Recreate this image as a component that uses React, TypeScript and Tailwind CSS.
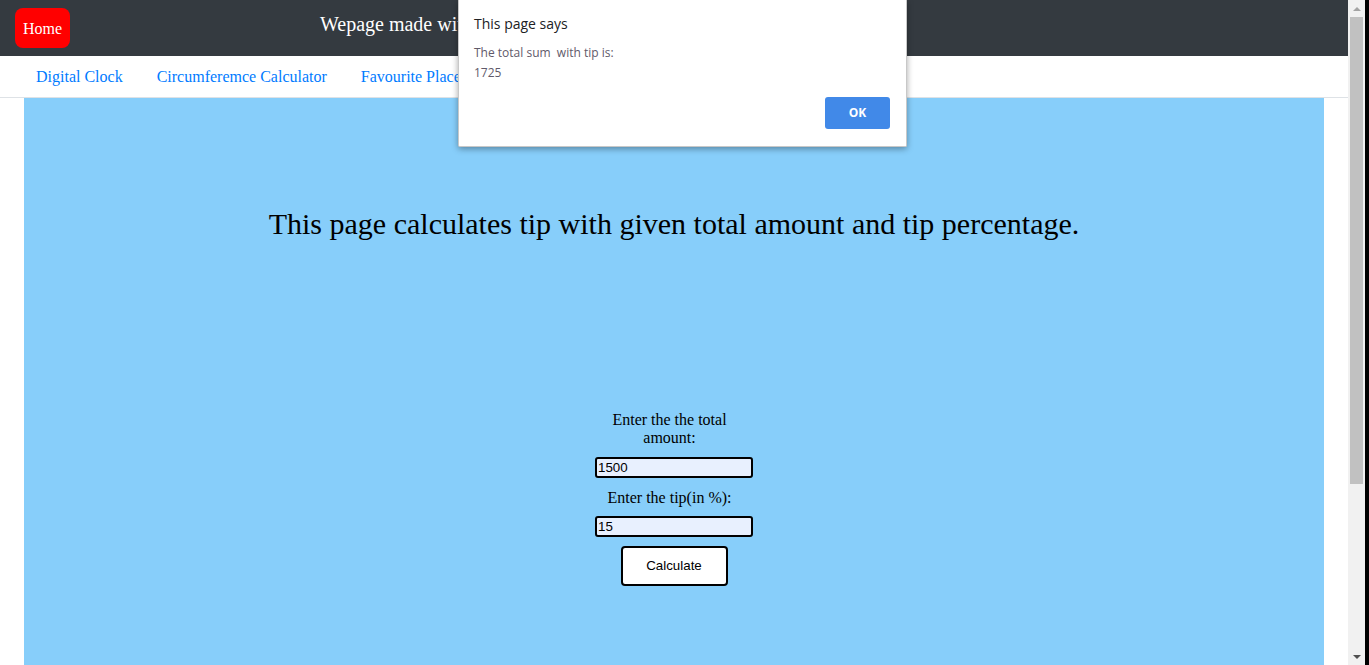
import React from 'react';

const serif = { fontFamily: '"Liberation Serif", "Times New Roman", serif' };
const sans = { fontFamily: '"Liberation Sans", Arial, sans-serif' };

function Scrollbar() {
	return (
		<div className="flex h-full w-[17px] flex-col bg-[#f1f1f1]">
			<div className="flex h-[17px] items-center justify-center">
				<div className="h-0 w-0 border-x-[4px] border-b-[4px] border-x-transparent border-b-[#a3a3a3]" />
			</div>
			<div className="mx-[2px] h-[467px] bg-[#c1c1c1]" />
			<div className="flex-1" />
			<div className="flex h-[17px] items-center justify-center">
				<div className="h-0 w-0 border-x-[4px] border-t-[4px] border-x-transparent border-t-[#505050]" />
			</div>
		</div>
	);
}

function AlertBox() {
	return (
		<div
			className="absolute left-[458px] top-0 flex h-[147px] w-[449px] flex-col rounded-b-[2px] border border-t-0 border-[#c8c8c8] bg-white pl-[15px] pr-4 shadow-[0_2px_6px_rgba(0,0,0,0.35)]"
			style={{ fontFamily: '"Open Sans", "Noto Sans", sans-serif' }}
		>
			<div className="pt-[14px] text-[14px] leading-[20px] text-[#202124]">This page says</div>
			<div className="mt-[9px] whitespace-pre text-[12px] leading-[20px] text-[#5f5a6a]">
				{'The total sum  with tip is:'}
			</div>
			<div className="text-[12px] leading-[20px] text-[#5f5a6a]">1725</div>
			<div className="mt-[14px] flex justify-end">
				<button className="h-[32px] w-[65px] rounded-[3px] bg-[#4189e8] text-[12px] font-bold text-white">
					OK
				</button>
			</div>
		</div>
	);
}

export default function App() {
	return (
		<div className="relative flex h-[665px] w-[1369px] overflow-hidden bg-white">
			<div className="flex min-w-0 flex-1 flex-col" style={serif}>
				<header className="flex h-[56px] shrink-0 items-center bg-[#343a40] pl-[15px]">
					<button className="h-[40px] w-[55px] rounded-[8px] bg-[#ff0000] pt-[1px] text-[16px] text-white" style={serif}>
						Home
					</button>
					<h1 className="mb-[9px] ml-[250px] text-[20px] text-white">Wepage made with React</h1>
				</header>
				<nav className="flex h-[42px] shrink-0 items-center gap-[34px] border-b border-[#dee2e6] pl-[36px] text-[16px] text-[#007bff]">
					<a>Digital Clock</a>
					<a>Circumferemce Calculator</a>
					<a>Favourite Places</a>
				</nav>
				<main className="mx-6 flex flex-1 flex-col items-center bg-[#87cefa] text-black">
					<h2 className="pt-[108px] text-[30px] leading-[35px]">
						This page calculates tip with given total amount and tip percentage.
					</h2>
					<form className="mt-[170px] flex w-[158px] flex-col items-center text-center text-[16px] leading-[18px]">
						<label className="w-full pr-[9px]">Enter the the total amount:</label>
						<input
							defaultValue="1500"
							className="mt-[10px] h-[21px] w-[158px] rounded-[3px] border-2 border-black bg-[#e8f0fe] px-[1px] text-[13.33px]"
							style={sans}
						/>
						<label className="mt-[11px] w-full pr-[9px]">Enter the tip(in %):</label>
						<input
							defaultValue="15"
							className="mt-[9px] h-[21px] w-[158px] rounded-[3px] border-2 border-black bg-[#e8f0fe] px-[1px] text-[13.33px]"
							style={sans}
						/>
						<button
							type="button"
							className="mt-[9px] h-[40px] w-[107px] rounded-[4px] border-2 border-black bg-white text-[13.33px]"
							style={sans}
						>
							Calculate
						</button>
					</form>
				</main>
			</div>
			<Scrollbar />
			<div className="w-[4px] bg-black" />
			<AlertBox />
		</div>
	);
}
